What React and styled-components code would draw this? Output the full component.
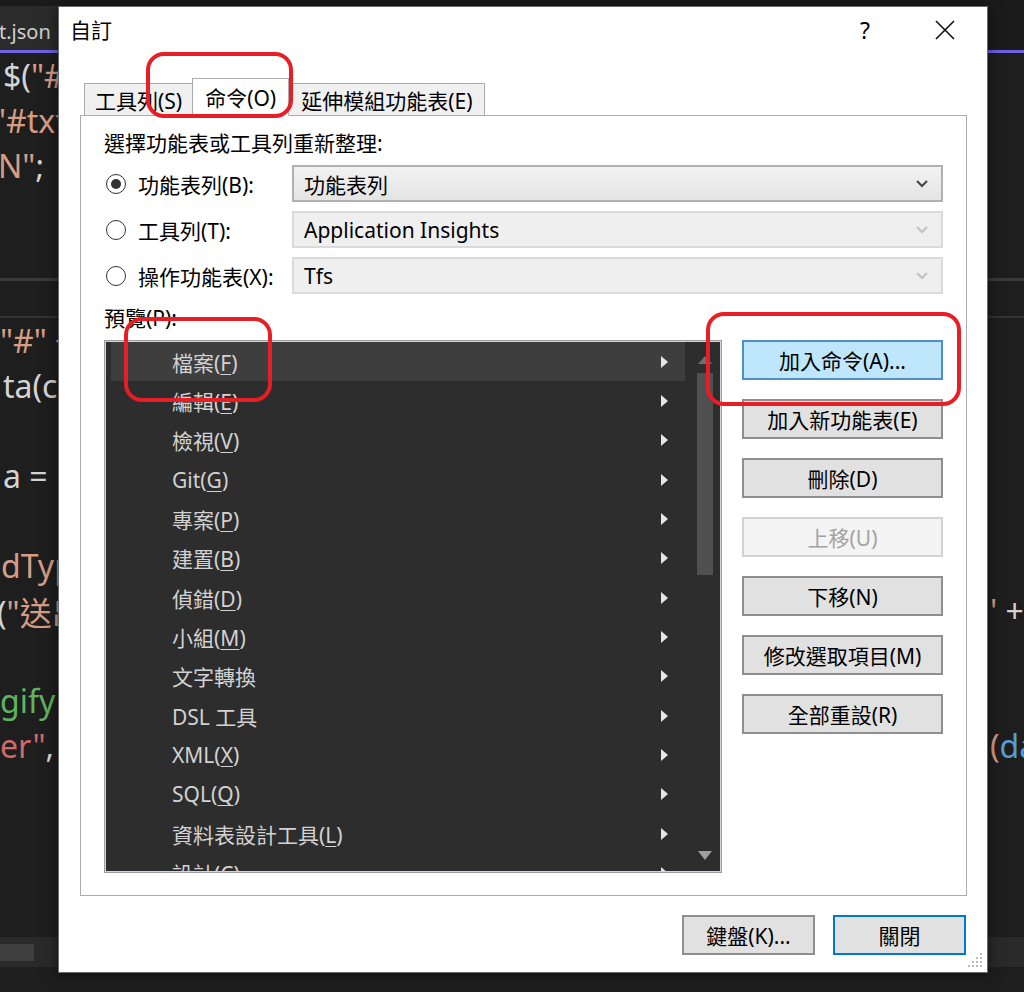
import React from 'react';
import styled, { createGlobalStyle } from 'styled-components';

const UI_FONT = `"Noto Sans", "Noto Sans CJK TC", sans-serif`;
const CODE_FONT = `"Noto Sans", "Noto Sans CJK TC", sans-serif`;

const W = '#d4d4d4';
const S = '#d69d85';
const R = '#d16969';
const G = '#5fb55f';
const B = '#569cd6';

const GlobalStyle = createGlobalStyle`
  html, body {
    margin: 0;
    padding: 0;
    background: #1e1e1e;
    overflow: hidden;
  }
  * {
    box-sizing: border-box;
  }
`;

const Screen = styled.div`
  position: relative;
  width: 1024px;
  height: 992px;
  overflow: hidden;
`;

/* ---------- editor behind the dialog ---------- */

const Editor = styled.div`
  display: flex;
  flex-direction: column;
  height: 100%;
  background: #1e1e1e;
`;

const TabBar = styled.div`
  height: 53px;
  padding-top: 6px;
  background: #1b1b1b;
  border-bottom: 3px solid #7160e8;
  display: flex;
`;

const FileTab = styled.div`
  height: 44px;
  width: 60px;
  background: #2b2b2b;
  color: #d0d0d0;
  font: 20px ${UI_FONT};
  display: flex;
  align-items: flex-end;
  padding-bottom: 5px;
  text-indent: -1px;
`;

const Pane = styled.div`
  flex: ${p => (p.$fill ? '1 1 auto' : `0 0 ${p.$height}px`)};
  min-height: 0;
  overflow: hidden;
`;

const Splitter = styled.div`
  flex: 0 0 40px;
  border-top: 3px solid #3a3a3a;
  border-bottom: 2px solid #333;
  background: #1e1e1e;
`;

const CodeLine = styled.div`
  height: 45px;
  display: grid;
  grid-template-columns: 990px 1fr;
  align-items: center;
  font: 32px ${CODE_FONT};
  white-space: pre;
`;

const CodeText = styled.div`
  overflow: hidden;
  padding-left: ${p => Math.max(p.$indent || 0, 0)}px;
  margin-left: ${p => Math.min(p.$indent || 0, 0)}px;
`;

const Tok = styled.span`
  color: ${p => p.$c};
`;

const HScroll = styled.div`
  flex: 0 0 30px;
  background: #2a2a2a;
  display: flex;
  align-items: center;
`;

const HThumb = styled.div`
  width: 34px;
  height: 17px;
  background: #3f3f3f;
`;

const BottomStrip = styled.div`
  flex: 0 0 25px;
  background: #1e1e1e;
`;

const upperLines = [
  { indent: 3, left: [['$(', W], ['"#txtName").val()', S]] },
  { indent: -7, left: [['"#txtTel").val()', S]] },
  { indent: -2, left: [['N"', S], [';', W]] },
  {},
  {},
];

const lowerLines = [
  { indent: 0, left: [['"#"', S], [' + id', W]] },
  { indent: 3, left: [['ta(cb)', W]] },
  {},
  { indent: 3, left: [['a = ', W]] },
  {},
  { indent: 1, left: [['dType', S]] },
  { indent: -3, left: [['(', W], ['"送出', S]], right: [["'", S], [' +', W]] },
  {},
  { indent: 0, left: [['gify ', G]] },
  { indent: 0, left: [['er"', R], [', {', W]], right: [['(', S], ['da', B]] },
  {},
  {},
  {},
  {},
];

function Line({ line }) {
  return (
    <CodeLine>
      <CodeText $indent={line.indent}>
        {(line.left || []).map(([t, c], i) => (
          <Tok key={i} $c={c}>{t}</Tok>
        ))}
      </CodeText>
      <CodeText>
        {(line.right || []).map(([t, c], i) => (
          <Tok key={i} $c={c}>{t}</Tok>
        ))}
      </CodeText>
    </CodeLine>
  );
}

/* ---------- dialog ---------- */

const Dialog = styled.div`
  position: absolute;
  left: 58px;
  top: 6px;
  width: 930px;
  height: 967px;
  background: #fff;
  border: 1px solid #6a6a6a;
  box-shadow: 0 0 14px rgba(0, 0, 0, 0.55);
  display: flex;
  flex-direction: column;
  font-family: ${UI_FONT};
  color: #000;
`;

const TitleBar = styled.div`
  flex: 0 0 71px;
  display: flex;
  align-items: flex-start;
  padding: 9px 12px 0 11px;
`;

const Title = styled.div`
  flex: 1;
  font-size: 21px;
  line-height: 28px;
`;

const TitleButton = styled.div`
  width: 60px;
  height: 28px;
  display: flex;
  align-items: center;
  justify-content: center;
  font-size: 23px;
  margin-left: ${p => p.$gap || 0}px;
`;

const Body = styled.div`
  flex: 1;
  min-height: 0;
  display: flex;
  flex-direction: column;
  padding: 0 20px 0 21px;
`;

const TabStrip = styled.div`
  display: flex;
  align-items: flex-end;
  padding-left: 4px;
  margin-bottom: -1px;
  position: relative;
  z-index: 1;
`;

const Tab = styled.div`
  height: ${p => (p.$active ? 38 : 33)}px;
  padding: 0 ${p => p.$pad}px;
  margin-right: -1px;
  display: flex;
  align-items: center;
  font-size: 21px;
  background: ${p => (p.$active ? '#fff' : '#f0f0f0')};
  border: 1px solid #acacac;
  border-bottom-color: ${p => (p.$active ? '#fff' : '#acacac')};
  position: relative;
  z-index: ${p => (p.$active ? 2 : 1)};
`;

const Panel = styled.div`
  flex: 1;
  min-height: 0;
  display: flex;
  flex-direction: column;
  border: 1px solid #acacac;
  padding: 13px 23px 22px 23px;
`;

const FieldLabel = styled.div`
  height: 28px;
  line-height: 28px;
  font-size: 21px;
  margin-top: ${p => p.$top || 0}px;
`;

const ChoiceGrid = styled.div`
  margin-top: 8px;
  display: grid;
  grid-template-columns: 188px 1fr;
  grid-auto-rows: 37px;
  row-gap: 9px;
`;

const RadioLabel = styled.div`
  display: flex;
  align-items: center;
  gap: 12px;
  padding-left: 2px;
  font-size: 21px;
`;

const Radio = styled.span`
  width: 20px;
  height: 20px;
  border-radius: 50%;
  border: 1.5px solid #333;
  background: #fff;
  display: flex;
  align-items: center;
  justify-content: center;
  &::after {
    content: '';
    width: 10px;
    height: 10px;
    border-radius: 50%;
    background: ${p => (p.$checked ? '#333' : 'transparent')};
  }
`;

const Combo = styled.div`
  display: flex;
  align-items: center;
  padding: 0 12px 0 10px;
  font-size: 21px;
  border: 2px solid ${p => (p.$disabled ? '#dadada' : '#b0b0b0')};
  background: ${p =>
    p.$disabled ? '#efefef' : 'linear-gradient(#f2f2f2, #e4e4e4)'};
  color: #000;
  span {
    flex: 1;
  }
`;

const PreviewArea = styled.div`
  flex: 1;
  margin-top: 8px;
  display: flex;
  gap: 20px;
  min-height: 0;
`;

const ListBox = styled.div`
  flex: 0 0 618px;
  border: 1px solid #9c9ca4;
  padding: 1px;
  background: #d4d4d4;
  display: flex;
  min-height: 0;
`;

const ListInner = styled.div`
  flex: 1;
  display: flex;
  background: #2d2d2d;
  overflow: hidden;
`;

const Items = styled.div`
  flex: 1;
  padding: 0 5px;
  overflow: hidden;
`;

const Item = styled.div`
  height: 39.33px;
  display: flex;
  align-items: center;
  padding: 0 17px 0 61px;
  font-size: 21px;
  color: #d2d2d2;
  white-space: nowrap;
  background: ${p => (p.$selected ? '#3e3e3e' : 'transparent')};
  span {
    flex: 1;
  }
`;

const Key = styled.u`
  text-underline-offset: 3px;
  text-decoration-thickness: 1px;
`;

const SubArrow = styled.i`
  width: 0;
  height: 0;
  border-left: 7px solid #e6e6e6;
  border-top: 6px solid transparent;
  border-bottom: 6px solid transparent;
`;

const ScrollBar = styled.div`
  flex: 0 0 30px;
  display: flex;
  flex-direction: column;
  align-items: center;
`;

const ScrollButton = styled.div`
  flex: 0 0 31px;
  display: flex;
  align-items: center;
  justify-content: center;
  &::after {
    content: '';
    width: 0;
    height: 0;
    border-left: 7px solid transparent;
    border-right: 7px solid transparent;
    ${p =>
      p.$up
        ? `border-bottom: 8px solid #6e6e6e; margin-top: 5px;`
        : `border-top: 9px solid #a0a0a0;`}
  }
`;

const Track = styled.div`
  flex: 1;
  width: 16px;
`;

const Thumb = styled.div`
  height: 202px;
  background: #505050;
`;

const ButtonColumn = styled.div`
  flex: 1;
  display: flex;
  flex-direction: column;
  gap: 19px;
`;

const Button = styled.div`
  flex-shrink: 0;
  height: 40px;
  width: ${p => (p.$width ? `${p.$width}px` : 'auto')};
  display: flex;
  align-items: center;
  justify-content: center;
  font-size: 21px;
  white-space: nowrap;
  color: ${p => (p.$variant === 'disabled' ? '#a3a3a3' : '#000')};
  background: ${p =>
    p.$variant === 'primary' ? '#bee6fd' : p.$variant === 'disabled' ? '#f4f4f4' : '#e1e1e1'};
  border: 2px solid
    ${p =>
      p.$variant === 'primary'
        ? '#4f8fc9'
        : p.$variant === 'disabled'
        ? '#d2d2d2'
        : p.$variant === 'default'
        ? '#0078d7'
        : '#8f8f8f'};
`;

const Footer = styled.div`
  flex: 0 0 76px;
  display: flex;
  justify-content: flex-end;
  align-items: flex-start;
  gap: 18px;
  padding: 19px 21px 0 0;
`;

const Grip = styled.svg`
  position: absolute;
  right: 2px;
  bottom: 2px;
`;

const Mark = styled.div`
  position: absolute;
  left: ${p => p.$x}px;
  top: ${p => p.$y}px;
  width: ${p => p.$w}px;
  height: ${p => p.$h}px;
  border: 4px solid #e81e25;
  border-radius: 18px;
  pointer-events: none;
  z-index: 5;
`;

const tabs = [
  { label: '工具列(S)', pad: 10 },
  { label: '命令(O)', pad: 12, active: true },
  { label: '延伸模組功能表(E)', pad: 12 },
];

const choices = [
  { label: '功能表列(B):', value: '功能表列', checked: true },
  { label: '工具列(T):', value: 'Application Insights', disabled: true },
  { label: '操作功能表(X):', value: 'Tfs', disabled: true },
];

const menuItems = [
  ['檔案', 'F'],
  ['編輯', 'E'],
  ['檢視', 'V'],
  ['Git', 'G'],
  ['專案', 'P'],
  ['建置', 'B'],
  ['偵錯', 'D'],
  ['小組', 'M'],
  ['文字轉換'],
  ['DSL 工具'],
  ['XML', 'X'],
  ['SQL', 'Q'],
  ['資料表設計工具', 'L'],
  ['設計', 'C'],
];

const actions = [
  { label: '加入命令(A)...', variant: 'primary' },
  { label: '加入新功能表(E)' },
  { label: '刪除(D)' },
  { label: '上移(U)', variant: 'disabled' },
  { label: '下移(N)' },
  { label: '修改選取項目(M)' },
  { label: '全部重設(R)' },
];

function Chevron({ disabled }) {
  return (
    <svg width="14" height="9" viewBox="0 0 14 9">
      <path
        d="M2 2 L7 7 L12 2"
        fill="none"
        stroke={disabled ? '#c2c2c2' : '#444'}
        strokeWidth="2"
      />
    </svg>
  );
}

function CloseIcon() {
  return (
    <svg width="20" height="20" viewBox="0 0 20 20">
      <path d="M1 1 L19 19 M19 1 L1 19" stroke="#111" strokeWidth="1.6" />
    </svg>
  );
}

function GripDots() {
  const dots = [];
  for (let r = 0; r < 4; r++) {
    for (let c = 3 - r; c < 4; c++) {
      dots.push(<rect key={`${r}-${c}`} x={c * 4 + 1} y={r * 4 + 1} width="2" height="2" fill="#b9b9b9" />);
    }
  }
  return (
    <Grip width="18" height="18" viewBox="0 0 18 18">
      {dots}
    </Grip>
  );
}

export default function App() {
  return (
    <Screen>
      <GlobalStyle />
      <Editor>
        <TabBar>
          <FileTab>t.json</FileTab>
        </TabBar>
        <Pane $height={225}>
          {upperLines.map((l, i) => (
            <Line key={i} line={l} />
          ))}
        </Pane>
        <Splitter />
        <Pane $fill>
          {lowerLines.map((l, i) => (
            <Line key={i} line={l} />
          ))}
        </Pane>
        <HScroll>
          <HThumb />
        </HScroll>
        <BottomStrip />
      </Editor>

      <Dialog>
        <TitleBar>
          <Title>自訂</Title>
          <TitleButton>?</TitleButton>
          <TitleButton $gap={20}>
            <CloseIcon />
          </TitleButton>
        </TitleBar>

        <Body>
          <TabStrip>
            {tabs.map(t => (
              <Tab key={t.label} $active={t.active} $pad={t.pad}>
                {t.label}
              </Tab>
            ))}
          </TabStrip>

          <Panel>
            <FieldLabel>選擇功能表或工具列重新整理:</FieldLabel>
            <ChoiceGrid>
              {choices.map(c => (
                <React.Fragment key={c.label}>
                  <RadioLabel>
                    <Radio $checked={c.checked} />
                    {c.label}
                  </RadioLabel>
                  <Combo $disabled={c.disabled}>
                    <span>{c.value}</span>
                    <Chevron disabled={c.disabled} />
                  </Combo>
                </React.Fragment>
              ))}
            </ChoiceGrid>

            <FieldLabel $top={10}>預覽(P):</FieldLabel>

            <PreviewArea>
              <ListBox>
                <ListInner>
                  <Items>
                    {menuItems.map(([name, key], i) => (
                      <Item key={name} $selected={i === 0}>
                        <span>
                          {name}
                          {key && (
                            <>
                              (<Key>{key}</Key>)
                            </>
                          )}
                        </span>
                        <SubArrow />
                      </Item>
                    ))}
                  </Items>
                  <ScrollBar>
                    <ScrollButton $up />
                    <Track>
                      <Thumb />
                    </Track>
                    <ScrollButton />
                  </ScrollBar>
                </ListInner>
              </ListBox>

              <ButtonColumn>
                {actions.map(a => (
                  <Button key={a.label} $variant={a.variant}>
                    {a.label}
                  </Button>
                ))}
              </ButtonColumn>
            </PreviewArea>
          </Panel>
        </Body>

        <Footer>
          <Button $width={133}>鍵盤(K)...</Button>
          <Button $width={133} $variant="default">
            關閉
          </Button>
        </Footer>

        <GripDots />

        <Mark $x={87} $y={45} $w={147} $h={66} />
        <Mark $x={65} $y={310} $w={148} $h={85} />
        <Mark $x={647} $y={305} $w={255} $h={94} />
      </Dialog>
    </Screen>
  );
}
